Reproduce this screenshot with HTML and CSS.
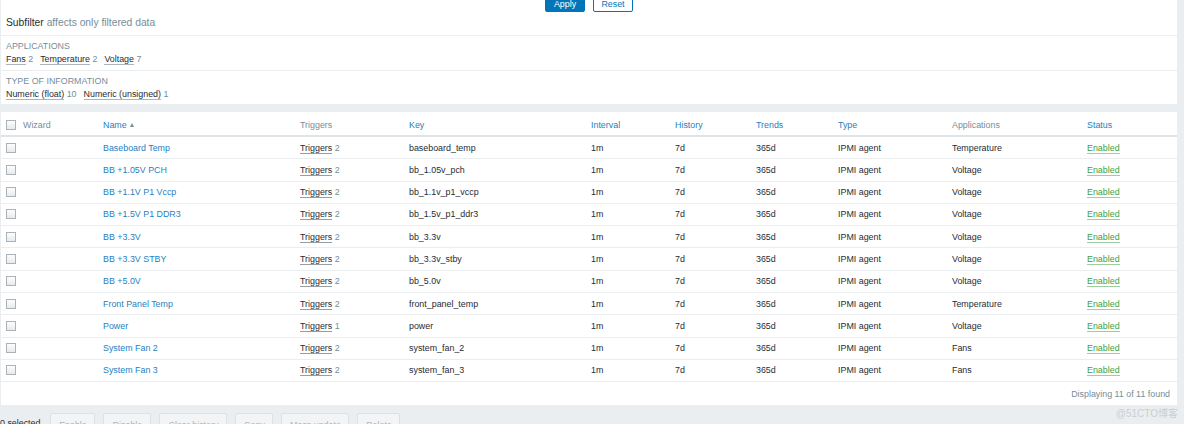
FILE: index.html
```html
<!DOCTYPE html>
<html>
<head>
<meta charset="utf-8">
<link rel="stylesheet" href="styles.css">
</head>
<body>
<div class="page">
  <div class="filter">
    <div class="filter-buttons">
      <button class="btn btn-apply">Apply</button>
      <button class="btn btn-reset">Reset</button>
    </div>
    <div class="subfilter-head">Subfilter <span class="muted">affects only filtered data</span></div>
    <div class="subfilter-sec">
      <div class="sec-label">APPLICATIONS</div>
      <div class="sec-values">
        <span class="tag"><span class="ul">Fans</span> <span class="muted">2</span></span>
        <span class="tag"><span class="ul">Temperature</span> <span class="muted">2</span></span>
        <span class="tag"><span class="ul">Voltage</span> <span class="muted">7</span></span>
      </div>
    </div>
    <div class="subfilter-sec last">
      <div class="sec-label">TYPE OF INFORMATION</div>
      <div class="sec-values">
        <span class="tag"><span class="ul">Numeric (float)</span> <span class="muted">10</span></span>
        <span class="tag"><span class="ul">Numeric (unsigned)</span> <span class="muted">1</span></span>
      </div>
    </div>
  </div>

  <div class="list">
    <table class="items">
      <colgroup>
        <col class="c-chk"><col class="c-wiz"><col class="c-name"><col class="c-trg"><col class="c-key">
        <col class="c-int"><col class="c-hist"><col class="c-trend"><col class="c-type"><col class="c-app"><col class="c-status">
      </colgroup>
      <thead>
        <tr>
          <th><span class="chk"></span></th>
          <th class="h-gray">Wizard</th>
          <th class="h-link">Name <span class="arrow-up"></span></th>
          <th class="h-gray">Triggers</th>
          <th class="h-link">Key</th>
          <th class="h-link">Interval</th>
          <th class="h-link">History</th>
          <th class="h-link">Trends</th>
          <th class="h-link">Type</th>
          <th class="h-gray">Applications</th>
          <th class="h-link">Status</th>
        </tr>
      </thead>
      <tbody>
        <tr><td><span class="chk"></span></td><td></td><td><a class="lnk">Baseboard Temp</a></td><td><span class="trg">Triggers</span> <span class="muted">2</span></td><td>baseboard_temp</td><td>1m</td><td>7d</td><td>365d</td><td>IPMI agent</td><td>Temperature</td><td><span class="enabled">Enabled</span></td></tr>
        <tr><td><span class="chk"></span></td><td></td><td><a class="lnk">BB +1.05V PCH</a></td><td><span class="trg">Triggers</span> <span class="muted">2</span></td><td>bb_1.05v_pch</td><td>1m</td><td>7d</td><td>365d</td><td>IPMI agent</td><td>Voltage</td><td><span class="enabled">Enabled</span></td></tr>
        <tr><td><span class="chk"></span></td><td></td><td><a class="lnk">BB +1.1V P1 Vccp</a></td><td><span class="trg">Triggers</span> <span class="muted">2</span></td><td>bb_1.1v_p1_vccp</td><td>1m</td><td>7d</td><td>365d</td><td>IPMI agent</td><td>Voltage</td><td><span class="enabled">Enabled</span></td></tr>
        <tr><td><span class="chk"></span></td><td></td><td><a class="lnk">BB +1.5V P1 DDR3</a></td><td><span class="trg">Triggers</span> <span class="muted">2</span></td><td>bb_1.5v_p1_ddr3</td><td>1m</td><td>7d</td><td>365d</td><td>IPMI agent</td><td>Voltage</td><td><span class="enabled">Enabled</span></td></tr>
        <tr><td><span class="chk"></span></td><td></td><td><a class="lnk">BB +3.3V</a></td><td><span class="trg">Triggers</span> <span class="muted">2</span></td><td>bb_3.3v</td><td>1m</td><td>7d</td><td>365d</td><td>IPMI agent</td><td>Voltage</td><td><span class="enabled">Enabled</span></td></tr>
        <tr><td><span class="chk"></span></td><td></td><td><a class="lnk">BB +3.3V STBY</a></td><td><span class="trg">Triggers</span> <span class="muted">2</span></td><td>bb_3.3v_stby</td><td>1m</td><td>7d</td><td>365d</td><td>IPMI agent</td><td>Voltage</td><td><span class="enabled">Enabled</span></td></tr>
        <tr><td><span class="chk"></span></td><td></td><td><a class="lnk">BB +5.0V</a></td><td><span class="trg">Triggers</span> <span class="muted">2</span></td><td>bb_5.0v</td><td>1m</td><td>7d</td><td>365d</td><td>IPMI agent</td><td>Voltage</td><td><span class="enabled">Enabled</span></td></tr>
        <tr><td><span class="chk"></span></td><td></td><td><a class="lnk">Front Panel Temp</a></td><td><span class="trg">Triggers</span> <span class="muted">2</span></td><td>front_panel_temp</td><td>1m</td><td>7d</td><td>365d</td><td>IPMI agent</td><td>Temperature</td><td><span class="enabled">Enabled</span></td></tr>
        <tr><td><span class="chk"></span></td><td></td><td><a class="lnk">Power</a></td><td><span class="trg">Triggers</span> <span class="muted">1</span></td><td>power</td><td>1m</td><td>7d</td><td>365d</td><td>IPMI agent</td><td>Voltage</td><td><span class="enabled">Enabled</span></td></tr>
        <tr><td><span class="chk"></span></td><td></td><td><a class="lnk">System Fan 2</a></td><td><span class="trg">Triggers</span> <span class="muted">2</span></td><td>system_fan_2</td><td>1m</td><td>7d</td><td>365d</td><td>IPMI agent</td><td>Fans</td><td><span class="enabled">Enabled</span></td></tr>
        <tr><td><span class="chk"></span></td><td></td><td><a class="lnk">System Fan 3</a></td><td><span class="trg">Triggers</span> <span class="muted">2</span></td><td>system_fan_3</td><td>1m</td><td>7d</td><td>365d</td><td>IPMI agent</td><td>Fans</td><td><span class="enabled">Enabled</span></td></tr>
      </tbody>
    </table>
    <div class="list-footer">Displaying 11 of 11 found</div>
  </div>

  <div class="actions">
    <span class="selected">0 selected</span>
    <button class="btn btn-dis">Enable</button>
    <button class="btn btn-dis">Disable</button>
    <button class="btn btn-dis">Clear history</button>
    <button class="btn btn-dis">Copy</button>
    <button class="btn btn-dis">Mass update</button>
    <button class="btn btn-dis">Delete</button>
  </div>
  <div class="watermark">@51CTO博客</div>
</div>
</body>
</html>
```

FILE: styles.css
```css
html, body {
  margin: 0;
  padding: 0;
  background: #ebeef0;
  overflow: hidden;
}
body {
  font-family: "Liberation Sans", Arial, sans-serif;
  font-size: 8.9px;
  color: #1f2c33;
}
.page {
  position: relative;
  height: 424px;
  padding: 0 7px 0 1px;
}
.muted { color: #768d99; }

/* filter */
.filter {
  display: flow-root;
  background: #fff;
  height: 104px;
}
.filter-buttons {
  display: flex;
  justify-content: center;
  gap: 8px;
  margin-top: -4px;
  height: 16px;
}
.btn {
  font-family: "Liberation Sans", Arial, sans-serif;
  font-size: 8.9px;
  box-sizing: border-box;
  border-radius: 2px;
  padding: 0;
  margin: 0;
  cursor: pointer;
}
.btn-apply, .btn-reset {
  width: 40px;
  height: 16px;
  line-height: 14px;
  border: 1px solid #0275b8;
}
.btn-apply {
  background: #0275b8;
  color: #fff;
}
.btn-reset {
  background: #fff;
  color: #0275b8;
}
.subfilter-head {
  padding: 4px 5px 5px;
  line-height: 14px;
  height: 14px;
  font-size: 10.3px;
  border-bottom: 1px solid #ebeef0;
}
.subfilter-sec {
  padding: 4px 5px 4px;
  border-bottom: 1px solid #ebeef0;
}
.subfilter-sec.last {
  border-bottom: none;
  padding-bottom: 0;
}
.sec-label {
  line-height: 12px;
  color: #768d99;
}
.sec-values {
  display: flex;
  gap: 7px;
  line-height: 14px;
}
.ul {
  border-bottom: 1px solid #aab4ba;
}

/* list */
.list {
  background: #fff;
  margin-top: 8px;
}
.items {
  width: 100%;
  table-layout: fixed;
  border-collapse: collapse;
}
.c-chk { width: 17px; }
.c-wiz { width: 80px; }
.c-name { width: 197px; }
.c-trg { width: 109px; }
.c-key { width: 182px; }
.c-int { width: 84px; }
.c-hist { width: 81px; }
.c-trend { width: 82px; }
.c-type { width: 114px; }
.c-app { width: 135px; }
.c-status { width: 95px; }

.items th {
  text-align: left;
  font-weight: normal;
  padding: 6px 0 3px 5px;
  line-height: 14px;
  border-bottom: 2px solid #dfe4e7;
  white-space: nowrap;
}
.h-gray { color: #768d99; }
.h-link { color: #1f80c2; }
.arrow-up {
  display: inline-block;
  width: 0;
  height: 0;
  border-left: 2.5px solid transparent;
  border-right: 2.5px solid transparent;
  border-bottom: 4px solid #768d99;
  margin-left: 1px;
  vertical-align: 1px;
}
.items td {
  padding: 3.65px 0 3.65px 5px;
  line-height: 14px;
  border-bottom: 1px solid #ebeef0;
  white-space: nowrap;
  overflow: hidden;
}
.chk {
  display: inline-block;
  box-sizing: border-box;
  width: 10px;
  height: 10px;
  border: 1px solid #a9b3b9;
  background: linear-gradient(#fdfdfd, #e8eaeb);
  vertical-align: -2px;
}
.lnk { color: #1f80c2; }
.trg {
  border-bottom: 1px solid #959ea4;
}
.enabled {
  color: #3e9f45;
  border-bottom: 1px solid #9ccf9f;
}
.list-footer {
  text-align: right;
  color: #768d99;
  line-height: 14px;
  padding: 5px 7px 4px 0;
}

/* actions */
.actions {
  display: flex;
  align-items: flex-start;
  margin-top: 8px;
  margin-left: -1px;
}
.selected {
  line-height: 14px;
  padding-top: 3px;
  margin-right: 10px;
  color: #1f2c33;
}
.btn-dis {
  background: #f2f4f5;
  border: 1px solid #dce1e4;
  color: #acb5ba;
  height: 24px;
  line-height: 18px;
  margin-right: 8px;
}
.btn-dis:nth-of-type(1) { width: 45px; }
.btn-dis:nth-of-type(2) { width: 48px; }
.btn-dis:nth-of-type(3) { width: 68px; }
.btn-dis:nth-of-type(4) { width: 38px; }
.btn-dis:nth-of-type(5) { width: 68px; }
.btn-dis:nth-of-type(6) { width: 43px; }

.watermark {
  position: absolute;
  right: 6px;
  top: 405px;
  color: #c9cfd3;
  font-family: "Liberation Sans", "Noto Sans CJK SC", sans-serif;
  font-size: 10px;
}
```
